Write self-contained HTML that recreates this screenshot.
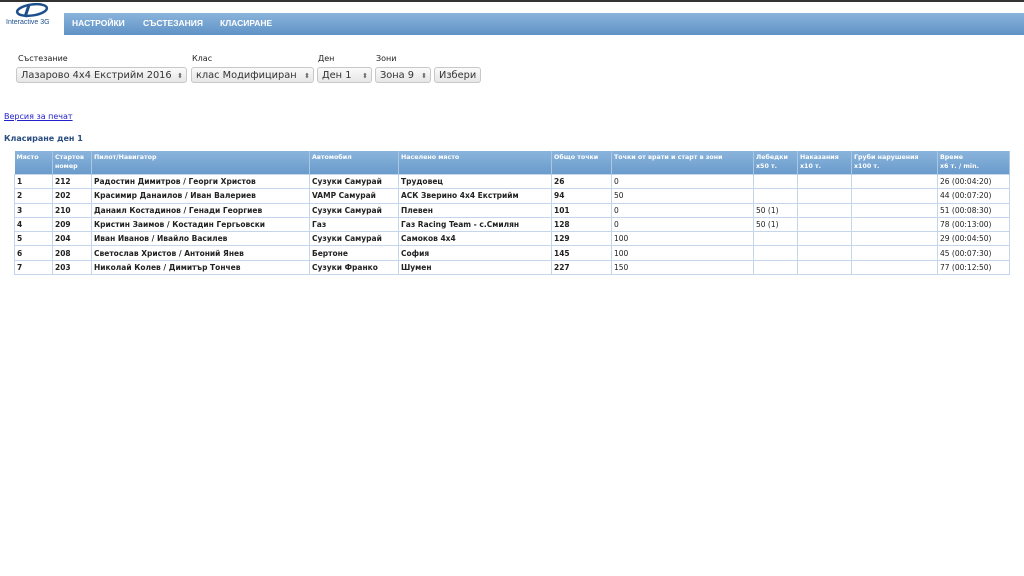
<!DOCTYPE html>
<html><head><meta charset="utf-8"><style>
body{margin:0;background:#fff;font-family:"DejaVu Sans","Liberation Sans",sans-serif;width:1024px;height:576px;overflow:hidden;position:relative}
.top{position:absolute;left:0;top:0;width:1024px;height:2px;background:#333}
.nav{position:absolute;left:64px;top:13px;width:960px;height:22px;background:linear-gradient(#8ab4dc,#5f92c6);}
.nav span{position:absolute;top:5px;color:#fff;font-weight:bold;font-size:8.5px;font-family:"Liberation Sans",sans-serif}
.logo{position:absolute;left:5px;top:3px}
.lbl{position:absolute;top:54px;font-size:8px;color:#222}
.sel{position:absolute;top:67px;height:16px;border:1px solid #c8c8c8;border-radius:3px;background:linear-gradient(#fafafa,#e6e6e6);font-size:9.8px;color:#333;line-height:16px;padding-left:4px;box-sizing:border-box;white-space:nowrap;overflow:hidden}
.sel i{position:absolute;right:3px;top:0;font-style:normal;font-size:7px;color:#666}
a{position:absolute;left:4px;top:112px;font-size:8px;color:#22c}
h4{position:absolute;left:4px;top:134px;margin:0;font-size:8px;color:#2b4d80}
table{position:absolute;left:14px;top:151px;width:996px;border-collapse:collapse;font-size:7.5px;table-layout:fixed}
th{background:linear-gradient(#8ab4dc,#6a9bcc);color:#fff;font-weight:bold;text-align:left;vertical-align:top;height:21px;padding:2px 2px 0;border-right:1px solid #a9c6e3;font-size:6.3px;line-height:9px;overflow:hidden;white-space:nowrap}
td{height:13.3px;padding:0 2px;border:1px solid #c5d6ea;color:#222;font-size:7.5px;white-space:nowrap;overflow:hidden}
td.b{font-weight:bold}
</style></head><body>
<div class="top"></div>
<div class="logo"><svg width="52" height="22"><ellipse cx="27" cy="7" rx="15" ry="5.5" fill="none" stroke="#1d4f8c" stroke-width="2.5" transform="rotate(-8 27 7)"/><path d="M24 2 L20 14" stroke="#1d4f8c" stroke-width="3"/><text x="1" y="21" font-size="7" fill="#1d4f8c" font-family="Liberation Sans">Interactive 3G</text></svg></div>
<div class="nav"><span style="left:8px">НАСТРОЙКИ</span><span style="left:79px">СЪСТЕЗАНИЯ</span><span style="left:156px">КЛАСИРАНЕ</span></div>
<div class="lbl" style="left:18px">Състезание</div><div class="lbl" style="left:192px">Клас</div><div class="lbl" style="left:318px">Ден</div><div class="lbl" style="left:376px">Зони</div>
<div class="sel" style="left:16px;width:171px">Лазарово 4х4 Екстрийм 2016<i>⬍</i></div>
<div class="sel" style="left:191px;width:123px">клас Модифициран<i>⬍</i></div>
<div class="sel" style="left:317px;width:55px">Ден 1<i>⬍</i></div>
<div class="sel" style="left:375px;width:56px">Зона 9<i>⬍</i></div>
<div class="sel" style="left:434px;width:47px">Избери</div>
<a href="#">Версия за печат</a>
<h4>Класиране ден 1</h4>
<table>
<colgroup><col style="width:38px"><col style="width:39px"><col style="width:218px"><col style="width:89px"><col style="width:153px"><col style="width:60px"><col style="width:142px"><col style="width:44px"><col style="width:54px"><col style="width:86px"><col></colgroup>
<tr><th>Място</th><th>Стартов<br>номер</th><th>Пилот/Навигатор</th><th>Автомобил</th><th>Населено място</th><th>Общо точки</th><th>Точки от врати и старт в зони</th><th>Лебедки<br>x50 т.</th><th>Наказания<br>x10 т.</th><th>Груби нарушения<br>x100 т.</th><th>Време<br>x6 т. / min.</th></tr>
<tr><td class="b">1</td><td class="b">212</td><td class="b">Радостин Димитров / Георги Христов</td><td class="b">Сузуки Самурай</td><td class="b">Трудовец</td><td class="b">26</td><td>0</td><td></td><td></td><td></td><td>26 (00:04:20)</td></tr>
<tr><td class="b">2</td><td class="b">202</td><td class="b">Красимир Данаилов / Иван Валериев</td><td class="b">VAMP Самурай</td><td class="b">АСК Зверино 4х4 Екстрийм</td><td class="b">94</td><td>50</td><td></td><td></td><td></td><td>44 (00:07:20)</td></tr>
<tr><td class="b">3</td><td class="b">210</td><td class="b">Данаил Костадинов / Генади Георгиев</td><td class="b">Сузуки Самурай</td><td class="b">Плевен</td><td class="b">101</td><td>0</td><td>50 (1)</td><td></td><td></td><td>51 (00:08:30)</td></tr>
<tr><td class="b">4</td><td class="b">209</td><td class="b">Кристин Заимов / Костадин Гергьовски</td><td class="b">Газ</td><td class="b">Газ Racing Team - с.Смилян</td><td class="b">128</td><td>0</td><td>50 (1)</td><td></td><td></td><td>78 (00:13:00)</td></tr>
<tr><td class="b">5</td><td class="b">204</td><td class="b">Иван Иванов / Ивайло Василев</td><td class="b">Сузуки Самурай</td><td class="b">Самоков 4х4</td><td class="b">129</td><td>100</td><td></td><td></td><td></td><td>29 (00:04:50)</td></tr>
<tr><td class="b">6</td><td class="b">208</td><td class="b">Светослав Христов / Антоний Янев</td><td class="b">Бертоне</td><td class="b">София</td><td class="b">145</td><td>100</td><td></td><td></td><td></td><td>45 (00:07:30)</td></tr>
<tr><td class="b">7</td><td class="b">203</td><td class="b">Николай Колев / Димитър Тончев</td><td class="b">Сузуки Франко</td><td class="b">Шумен</td><td class="b">227</td><td>150</td><td></td><td></td><td></td><td>77 (00:12:50)</td></tr>
</table>
</body></html>
